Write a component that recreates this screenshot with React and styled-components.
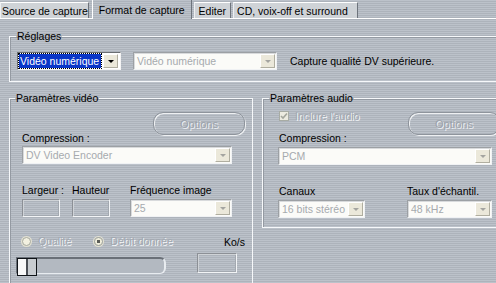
import React from 'react';
import styled, { createGlobalStyle } from 'styled-components';

const GlobalStyle = createGlobalStyle`
  html, body { margin: 0; padding: 0; }
  body {
    font-family: "Liberation Sans", Arial, sans-serif;
    font-size: 10.5px;
    color: #000;
  }
`;

const stripes = `repeating-linear-gradient(to bottom, #bcc2ca 0px, #bcc2ca 1px, #adb3bb 1px, #adb3bb 2px)`;

const Window = styled.div`
  width: 496px;
  height: 283px;
  overflow: hidden;
  background: ${stripes};
  display: flex;
  flex-direction: column;
`;

const TabBar = styled.div`
  display: flex;
  align-items: flex-end;
  height: 18px;
  gap: 2px;
  position: relative;
  z-index: 1;
`;

const Tab = styled.div`
  height: ${p => (p.$active ? 20 : 16)}px;
  margin-bottom: ${p => (p.$active ? -1 : 0)}px;
  margin-left: ${p => (p.$active ? 1 : 0)}px;
  padding: ${p => p.$pad};
  display: flex;
  align-items: center;
  box-sizing: border-box;
  font-size: 10.5px;
  white-space: nowrap;
  background: ${p => (p.$active ? stripes : '#cfd3d7')};
  border-top: 1px solid #fff;
  border-left: 1px solid ${p => (p.$active ? '#fff' : '#eef0f2')};
  border-right: 1px solid #6e747c;
`;

const Panel = styled.div`
  flex: 1;
  border-top: 1px solid #fff;
  padding: 11px 0 0 9px;
  display: flex;
  flex-direction: column;
  gap: 10px;
`;

const Group = styled.fieldset`
  margin: 0;
  min-width: 0;
  flex-shrink: 0;
  box-sizing: border-box;
  width: ${p => p.$width}px;
  padding: ${p => p.$pad};
  border: 1px solid #f6f8fa;
  box-shadow: inset 1px 1px 0 #949aa2;
`;

const Legend = styled.legend`
  margin-left: ${p => p.$lm}px;
  padding: 0 1px;
  line-height: 13px;
  font-size: 10.5px;
`;

const Row = styled.div`
  display: flex;
  align-items: center;
  gap: ${p => p.$gap || 0}px;
  margin-top: ${p => p.$mt || 0}px;
`;

const Columns = styled.div`
  display: flex;
  gap: 9px;
  align-items: flex-start;
`;

const Label = styled.div`
  line-height: 13px;
  font-size: 10.5px;
  width: ${p => (p.$width ? `${p.$width}px` : 'auto')};
  white-space: nowrap;
`;

const Combo = styled.div`
  width: ${p => p.$width}px;
  height: 18px;
  box-sizing: border-box;
  display: flex;
  align-items: center;
  background: #fbfbf8;
  border-top: 1px solid #9ca0a4;
  border-left: 1px solid #9ca0a4;
  border-right: 1px solid #f0f2f4;
  border-bottom: 1px solid #f0f2f4;
  box-shadow: inset 1px 1px 0 #d8dadc;
`;

const ComboText = styled.div`
  flex: 1;
  padding-left: 3px;
  color: #a6aaae;
  font-size: 10.5px;
  white-space: nowrap;
  overflow: hidden;
`;

const ArrowButton = styled.div`
  width: 15px;
  height: 14px;
  margin-right: 1px;
  flex-shrink: 0;
  box-sizing: border-box;
  display: flex;
  align-items: center;
  justify-content: center;
  background: #ebe8da;
  border-top: 1px solid #fff;
  border-left: 1px solid #fff;
  border-right: 1px solid #b0aea0;
  border-bottom: 1px solid #b0aea0;

  &::after {
    content: '';
    border-left: 3px solid transparent;
    border-right: 3px solid transparent;
    border-top: 3px solid ${p => (p.$enabled ? '#000' : '#a4a4a0')};
  }
`;

const ActiveSelect = styled.div`
  display: flex;
  align-items: center;
  width: 104px;
  height: 18px;
  box-sizing: border-box;
  background: #fff;
  border-top: 1px solid #6a6e72;
  border-left: 1px solid #6a6e72;
  border-right: 1px solid #f4f4f4;
  border-bottom: 1px solid #f4f4f4;
  padding: 1px;
`;

const Highlight = styled.div`
  flex: 1;
  height: 100%;
  margin-right: 2px;
  background: #0a36c8;
  color: #fff;
  font-size: 10.5px;
  line-height: 14px;
  padding-left: 1px;
  outline: 1px dotted #000;
  white-space: nowrap;
  overflow: hidden;
`;

const Field = styled.div`
  width: ${p => p.$width}px;
  height: ${p => p.$height || 18}px;
  box-sizing: border-box;
  border-top: 1px solid #8c9096;
  border-left: 1px solid #8c9096;
  border-right: 1px solid #f2f4f6;
  border-bottom: 1px solid #f2f4f6;
  box-shadow: inset 1px 1px 0 #cfd3d7, inset -1px -1px 0 #a3a9b0;
`;

const OptionsButton = styled.div`
  width: 92px;
  height: 23px;
  box-sizing: border-box;
  border-radius: 10px;
  border: 1px solid #8e949c;
  box-shadow: inset 1px 1px 0 #eef0f2, 1px 1px 0 #eef0f2;
  display: flex;
  align-items: center;
  justify-content: center;
  font-size: 11px;
  color: #9ca2aa;
  text-shadow: 1px 1px 0 #eef0f4;
  flex-shrink: 0;
`;

const Disabled = styled.span`
  color: #a2a8b0;
  text-shadow: 1px 1px 0 #f4f6f8;
  font-size: 10.5px;
  white-space: nowrap;
`;

const Radio = styled.span`
  width: 9px;
  height: 9px;
  border-radius: 50%;
  box-sizing: border-box;
  border: 1px solid #a6a9a0;
  background: ${p => (p.$checked ? 'radial-gradient(circle, #5c5e58 0 1.6px, #f0eedc 2px)' : '#f2f0e0')};
  box-shadow: 0 0 0 1px #e4e2d2;
  flex-shrink: 0;
`;

const Check = styled.span`
  width: 10px;
  height: 10px;
  box-sizing: border-box;
  border: 1px solid #a8aca4;
  background: #ecebe0;
  display: flex;
  align-items: center;
  justify-content: center;
`;

const BottomGrid = styled.div`
  display: grid;
  grid-template-columns: 181px 40px;
  margin-top: 17px;
  margin-left: -6px;
`;

const RadioRow = styled.div`
  display: flex;
  align-items: center;
  gap: 7px;
  padding-left: 6px;
  height: 12px;
  margin-top: 1px;
`;

const Slider = styled.div`
  width: 150px;
  height: 17px;
  margin-top: 10px;
  box-sizing: border-box;
  border-top: 2px solid #6a7078;
  border-left: 1px solid #6a7078;
  border-bottom: 1px solid #e8ecf0;
  border-right: 2px solid #e8ecf0;
  border-radius: 0 6px 6px 0;
  background: #b3b9c1;
  display: flex;
  align-items: center;
`;

const Thumb = styled.div`
  width: 20px;
  height: 18px;
  margin-top: 1px;
  box-sizing: border-box;
  border: 1px solid #101418;
  background: linear-gradient(to right, #f8f8f8 0 45%, #4a4e54 45% 55%, #c8ccd0 55%);
`;

const KoCol = styled.div`
  display: flex;
  flex-direction: column;
  align-items: flex-end;
`;

function ComboBox({ width, value }) {
  return (
    <Combo $width={width}>
      <ComboText>{value}</ComboText>
      <ArrowButton />
    </Combo>
  );
}

export default function App() {
  return (
    <>
      <GlobalStyle />
      <Window>
        <TabBar>
          <Tab $pad="0 0 0 1px">Source de capture</Tab>
          <Tab $active $pad="0 6px 0 6px">Format de capture</Tab>
          <Tab $pad="0 4px 0 4px">Editer</Tab>
          <Tab $pad="0 9px 0 3px">CD, voix-off et surround</Tab>
        </TabBar>
        <Panel>
          <Group $width={500} $pad="9px 0 11px 7px">
            <Legend $lm={-1}>Réglages</Legend>
            <Row>
              <ActiveSelect>
                <Highlight>Vidéo numérique</Highlight>
                <ArrowButton $enabled />
              </ActiveSelect>
              <Combo $width={144} style={{ marginLeft: 12 }}>
                <ComboText>Vidéo numérique</ComboText>
                <ArrowButton />
              </Combo>
              <Label style={{ marginLeft: 13 }}>Capture qualité DV supérieure.</Label>
            </Row>
          </Group>

          <Columns>
            <Group $width={244} $pad="7px 7px 40px 12px">
              <Legend $lm={-7}>Paramètres vidéo</Legend>
              <Row style={{ justifyContent: 'flex-end', height: 20, alignItems: 'flex-start' }}>
                <OptionsButton>Options</OptionsButton>
              </Row>
              <Label>Compression :</Label>
              <Row $mt={1}>
                <ComboBox width={210} value="DV Video Encoder" />
              </Row>
              <Row $mt={20}>
                <Label $width={50}>Largeur :</Label>
                <Label $width={58}>Hauteur</Label>
                <Label>Fréquence image</Label>
              </Row>
              <Row $mt={2}>
                <Field $width={38} />
                <Field $width={38} style={{ marginLeft: 12 }} />
                <Combo $width={102} style={{ marginLeft: 20 }}>
                  <ComboText>25</ComboText>
                  <ArrowButton />
                </Combo>
              </Row>
              <BottomGrid>
                <div>
                  <RadioRow>
                    <Radio />
                    <Disabled>Qualité</Disabled>
                    <Radio $checked style={{ marginLeft: 16 }} />
                    <Disabled>Débit donnée</Disabled>
                  </RadioRow>
                  <Slider>
                    <Thumb />
                  </Slider>
                </div>
                <KoCol>
                  <Label style={{ marginRight: -8, marginTop: 2 }}>Ko/s</Label>
                  <Field $width={40} $height={20} style={{ marginTop: 4 }} />
                </KoCol>
              </BottomGrid>
            </Group>

            <Group $width={250} $pad="5px 0 9px 15px">
              <Legend $lm={-9}>Paramètres audio</Legend>
              <Row style={{ alignItems: 'flex-start', height: 22 }}>
                <Row $gap={6} style={{ width: 129, marginLeft: 1 }}>
                  <Check>
                    <svg width="8" height="8" viewBox="0 0 8 8">
                      <path d="M1 4 L3 6 L7 1.5" stroke="#a4a69c" strokeWidth="1.6" fill="none" />
                    </svg>
                  </Check>
                  <Disabled>Inclure l'audio</Disabled>
                </Row>
                <OptionsButton style={{ marginTop: 2 }}>Options</OptionsButton>
              </Row>
              <Label style={{ marginLeft: 1 }}>Compression :</Label>
              <Row $mt={2}>
                <ComboBox width={214} value="PCM" />
              </Row>
              <Row $mt={20}>
                <Label $width={129} style={{ paddingLeft: 1, boxSizing: 'border-box' }}>Canaux</Label>
                <Label>Taux d'échantil.</Label>
              </Row>
              <Row $mt={2}>
                <ComboBox width={87} value="16 bits stéréo" />
                <Combo $width={85} style={{ marginLeft: 42 }}>
                  <ComboText>48 kHz</ComboText>
                  <ArrowButton />
                </Combo>
              </Row>
            </Group>
          </Columns>
        </Panel>
      </Window>
    </>
  );
}
